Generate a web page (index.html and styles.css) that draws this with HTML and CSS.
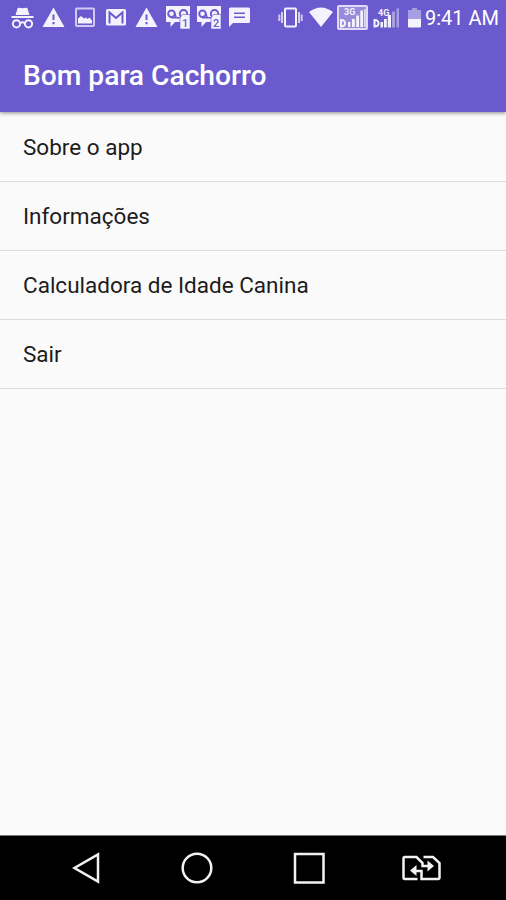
FILE: index.html
```html
<!DOCTYPE html>
<html lang="pt-BR">
<head>
    <meta charset="UTF-8">
    <meta name="viewport" content="width=device-width, initial-scale=1.0">
    <title>Bom para Cachorro</title>
    <link rel="stylesheet" href="styles.css">
</head>
<body>
    <header class="header">
        <div class="status-bar">
            <div class="notifications">
                <!-- Incognito -->
                <svg class="icon" viewBox="0 0 31 36">
                    <path class="fill" d="M8.500 15 10.500 8.500q.3-1 1.300-.8l3.700.5 3.700-.5q1-.2 1.300.8l2 6.500z"/>
                    <path class="fill" d="M4.500 16h22v2h-22z"/>
                    <path class="line" d="M13.500 23q2-1.300 4 0"/>
                    <circle class="line" cx="9.500" cy="23.800" r="3.600"/>
                    <circle class="line" cx="21.500" cy="23.800" r="3.600"/>
                </svg>
                <!-- Warning -->
                <svg class="icon" viewBox="0 0 31 36">
                    <path class="fill" fill-rule="evenodd" d="M15.500 7.500 26.500 27h-22zM14.500 14.500v5.500h2v-5.500zM14.500 22v2.200h2V22z"/>
                </svg>
                <!-- Image -->
                <svg class="icon" viewBox="0 0 31 36">
                    <rect class="line soft" x="7" y="8.500" width="18" height="17.500" rx="1"/>
                    <path class="fill" d="M9 23.500v-5l3-2.500 3 2.500 2-1 1.500 1.500 2-1.500 2.500 3v3z"/>
                </svg>
                <!-- Mail -->
                <svg class="icon" viewBox="0 0 31 36">
                    <rect class="fill" x="6" y="9" width="20" height="16.500" rx="1.500"/>
                    <path class="cut" d="M9.500 23.500V12.500l6.500 5.500 6.500-5.500v11"/>
                </svg>
                <svg class="icon" viewBox="0 0 31 36">
                    <path class="fill" fill-rule="evenodd" d="M15.500 7.500 26.500 27h-22zM14.500 14.500v5.500h2v-5.500zM14.500 22v2.200h2V22z"/>
                </svg>
                <!-- Voicemail, SIM 1 -->
                <svg class="icon" viewBox="0 0 31 36">
                    <path class="fill" d="M4 6h24v16h-15l-4.500 5v-5H4z"/>
                    <path class="cut thin" d="M9 17.800h9M12.800 13.500l1.500 4.300"/>
                    <circle class="cut" cx="9.500" cy="13.800" r="3.300"/>
                    <circle class="cut" cx="21.500" cy="13.800" r="3.700"/>
                    <path class="badge" d="M20.500 14.500h7.500v14.500h-10v-11z"/>
                    <text class="sim" x="20" y="27">1</text>
                </svg>
                <!-- Voicemail, SIM 2 -->
                <svg class="icon" viewBox="0 0 31 36">
                    <path class="fill" d="M4 6h24v16h-15l-4.500 5v-5H4z"/>
                    <path class="cut thin" d="M9 17.800h9M12.800 13.500l1.500 4.300"/>
                    <circle class="cut" cx="9.500" cy="13.800" r="3.300"/>
                    <circle class="cut" cx="21.500" cy="13.800" r="3.700"/>
                    <path class="badge" d="M20.500 14.500h7.500v14.500h-10v-11z"/>
                    <text class="sim" x="20" y="27">2</text>
                </svg>
                <!-- Message -->
                <svg class="icon" viewBox="0 0 31 36">
                    <path class="fill" d="M6.500 7.500h18q1.500 0 1.500 1.500v12.500q0 1.500-1.500 1.500H9L5 27V9q0-1.500 1.500-1.500z"/>
                    <path class="cut thin" d="M10 13.200h11M10 17.200h11"/>
                </svg>
            </div>
            <div class="system">
                <!-- Vibrate -->
                <svg class="icon" viewBox="0 0 31 36">
                    <rect class="line" x="10" y="8.500" width="11" height="18" rx="1"/>
                    <path class="line soft" d="M7 12v11M4.300 14.500v6.500M24 12v11M26.700 14.500v6.500"/>
                </svg>
                <!-- Wi-Fi -->
                <svg class="icon" viewBox="0 0 31 36">
                    <path class="fill" d="M15 27 3 12q12-9 24 0z"/>
                </svg>
                <!-- Signal, active SIM -->
                <svg class="icon" viewBox="0 0 31 36">
                    <rect class="frame" x="1" y="6" width="29" height="23" rx="1"/>
                    <text class="network" x="7" y="15">3G</text>
                    <path class="fill" d="M11 22h2.500v5H11zM15 19h2.800v8H15zM19.200 15.500H22V27h-2.800zM23.300 10.500h2.700V27h-2.700z"/>
                    <path class="fill soft" d="M27 9h1.800v18H27z"/>
                    <path class="line" d="M4 20v6.500q4 0 4-3.200T4 20z"/>
                </svg>
                <!-- Signal, second SIM -->
                <svg class="icon signal" viewBox="0 0 36 36">
                    <text class="network" x="10" y="15.500">4G</text>
                    <path class="fill" d="M12.500 22h2.500v5.500h-2.500zM16 19h2.800v8.500H16zM19.800 15h3.200v12.500h-3.200z"/>
                    <path class="fill faded" d="M24 11.500h3v16h-3zM28.500 8.500h2.500v19h-2.500z"/>
                    <path class="line" d="M6.500 20v6.500q4 0 4-3.200T6.500 20z"/>
                </svg>
                <!-- Battery -->
                <svg class="icon battery" viewBox="0 0 21 36">
                    <path class="fill faded" d="M8 8h5v2h4v9H4v-9h4z"/>
                    <path class="fill" d="M4 19h13v7.500q0 1-1 1H5q-1 0-1-1z"/>
                </svg>
                <span class="clock">9:41 AM</span>
            </div>
        </div>
        <h1 class="title">Bom para Cachorro</h1>
    </header>

    <main class="content">
        <ul class="menu">
            <li class="menu-item">Sobre o app</li>
            <li class="menu-item">Informações</li>
            <li class="menu-item">Calculadora de Idade Canina</li>
            <li class="menu-item">Sair</li>
        </ul>
    </main>

    <nav class="nav-bar">
        <svg class="nav-icon" viewBox="0 0 40 40" aria-label="Voltar">
            <path d="M33 6.500v27L9.500 20z"/>
        </svg>
        <svg class="nav-icon" viewBox="0 0 40 40" aria-label="Início">
            <circle cx="20" cy="20" r="14.300"/>
        </svg>
        <svg class="nav-icon" viewBox="0 0 40 40" aria-label="Recentes">
            <rect x="6" y="6" width="28.500" height="28.500"/>
        </svg>
        <svg class="nav-icon" viewBox="0 0 40 40" aria-label="Trocar SIM">
            <path d="M16.500 31H4q-1.500 0-1.500-1.500V10.500q0-1.500 1.500-1.500h11.500l6 6v3h6"/>
            <path d="M22.500 9h9.500l6.500 6v14.500q0 1.500-1.500 1.500H20.500v-8h-6"/>
            <path class="arrow" d="M26.500 12.500 33 18 26.500 23.500zM15.500 17 9 22.500 15.500 28z"/>
        </svg>
    </nav>
</body>
</html>
```

FILE: styles.css
```css
* {
    margin: 0;
    padding: 0;
    box-sizing: border-box;
    font-family: Roboto, sans-serif;
}

:root {
    --primary: #6a5acd;
    --background: #fafafa;
    --divider: #dcdcdc;
    --text: #1c1c1c;
}

body {
    display: flex;
    flex-direction: column;
    height: 100vh;
    overflow: hidden;
    background: var(--background);
}

.header {
    height: 112px;
    background: var(--primary);
    color: white;
    box-shadow: 0 1px 4px rgba(0,0,0,0.45);
}

.status-bar {
    display: flex;
    justify-content: space-between;
    height: 36px;
    padding: 0 8px 0 7px;
}

.notifications,
.system {
    display: flex;
}

.icon {
    width: 31px;
    height: 36px;
}

.signal {
    width: 36px;
}

.battery {
    width: 21px;
}

.clock {
    width: 73px;
    font-size: 20px;
    line-height: 37px;
    white-space: nowrap;
}

.fill,
.badge {
    fill: #f4f2ff;
}

.line,
.frame {
    fill: none;
    stroke: #f4f2ff;
    stroke-width: 2;
}

.frame {
    fill: rgba(255,255,255,0.3);
    stroke: #e0dcf8;
}

.cut {
    fill: none;
    stroke: var(--primary);
    stroke-width: 2;
}

.badge {
    stroke: var(--primary);
    stroke-width: 0.6;
}

.thin {
    stroke-width: 1.5;
}

.soft {
    opacity: 0.75;
}

.faded {
    opacity: 0.45;
}

.sim {
    fill: var(--primary);
    font-size: 11px;
    font-weight: 500;
}

.network {
    fill: #f4f2ff;
    font-size: 9px;
    font-weight: bold;
}

.title {
    padding-left: 23px;
    font-size: 28.2px;
    font-weight: 500;
    line-height: 79px;
}

.content {
    flex: 1;
    padding-top: 1px;
}

.menu {
    list-style: none;
}

.menu-item {
    height: 69px;
    padding-left: 23px;
    border-bottom: 1px solid var(--divider);
    color: var(--text);
    font-size: 22.5px;
    line-height: 68px;
}

.nav-bar {
    display: flex;
    justify-content: center;
    align-items: center;
    gap: 72px;
    height: 65px;
    border-top: 1px solid #777;
    background: black;
}

.nav-icon {
    width: 40px;
    height: 40px;
    fill: none;
    stroke: #f2f2f2;
    stroke-width: 2.5;
}

.arrow {
    fill: #f2f2f2;
    stroke: none;
}
```
